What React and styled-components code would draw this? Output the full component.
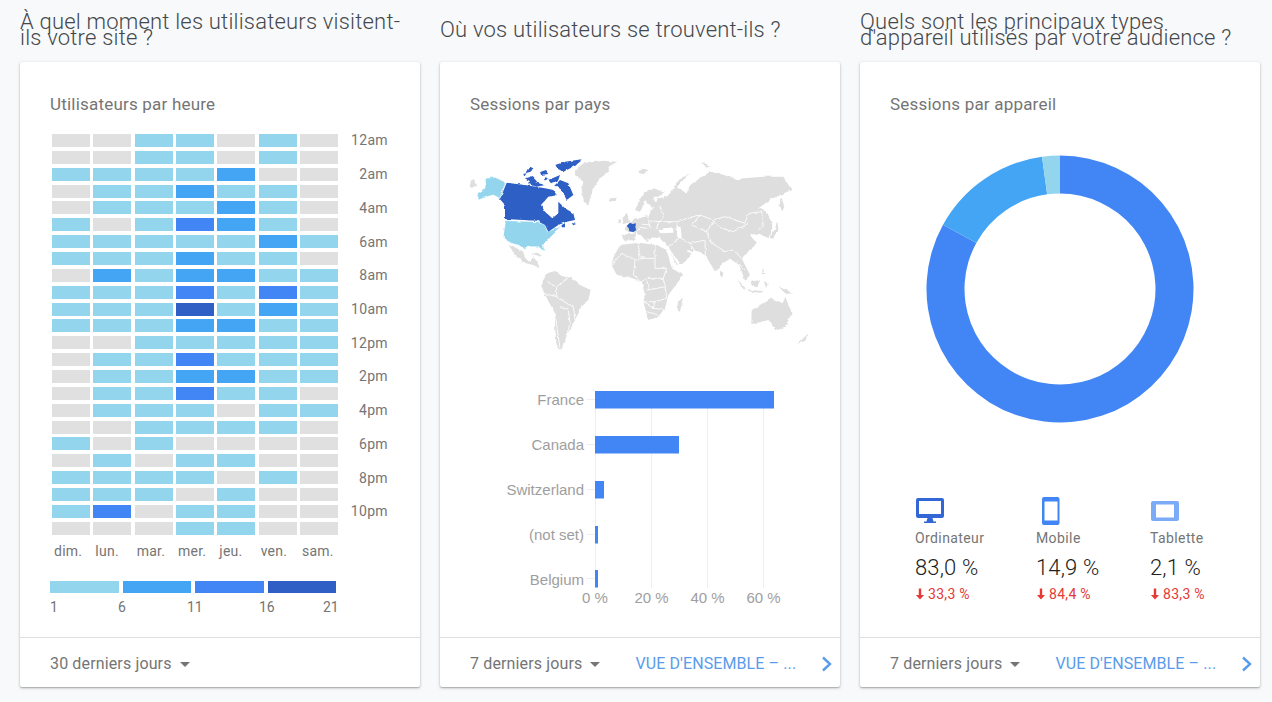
import React from "react";
import styled, { createGlobalStyle } from "styled-components";

const GRAY = "#e0e0e0";
const HEAT = [GRAY, "#93d5ed", "#45a5f5", "#4285f4", "#2f5ec4"];

const Global = createGlobalStyle`
  html, body { margin: 0; padding: 0; background: #f8f9fa; }
  body { font-family: Roboto, "Noto Sans", sans-serif; overflow: hidden; }
`;

const Page = styled.main`
  display: grid;
  grid-template-columns: repeat(3, 400px);
  column-gap: 20px;
  padding: 0 12px 0 20px;
  height: 702px;
  box-sizing: border-box;
`;
const Section = styled.section`
  display: flex;
  flex-direction: column;
`;
const Heading = styled.h2`
  display: flex;
  align-items: center;
  height: 59px;
  margin: 0 0 1px;
  font-size: 22px;
  font-weight: 300;
  line-height: 16px;
  letter-spacing: 0.2px;
  color: #44484c;
`;
const Card = styled.article`
  display: flex;
  flex-direction: column;
  height: 625px;
  margin-top: 2px;
  background: #fff;
  border-radius: 2px;
  box-shadow: 0 1px 3px rgba(60, 64, 67, 0.35), 0 1px 1px rgba(60, 64, 67, 0.2);
`;
const Body = styled.div`
  flex: 1;
  padding: 32px 0 0 30px;
  min-height: 0;
`;
const CardTitle = styled.h3`
  margin: 0;
  font-size: 17px;
  font-weight: 400;
  line-height: 20px;
  letter-spacing: 0.2px;
  color: #757575;
`;
const Footer = styled.footer`
  display: flex;
  align-items: center;
  height: 50px;
  padding: 2px 6px 0 30px;
  border-top: 1px solid #e0e0e0;
  box-sizing: border-box;
`;
const RangeSelect = styled.span`
  display: flex;
  align-items: center;
  font-size: 16px;
  letter-spacing: 0.14px;
  color: #757575;
`;
const Caret = styled.i`
  width: 0;
  height: 0;
  margin-left: 8px;
  margin-top: 2px;
  border-left: 5px solid transparent;
  border-right: 5px solid transparent;
  border-top: 5px solid #757575;
`;
const OverviewLink = styled.a`
  margin-left: 35px;
  font-size: 16px;
  letter-spacing: 0.1px;
  color: #5a9bea;
  white-space: nowrap;
`;
const Chevron = styled.svg`
  margin-left: auto;
  display: block;
`;

const HeatGrid = styled.div`
  display: grid;
  grid-template-columns: repeat(7, 38px) 1fr;
  grid-auto-rows: 13px;
  column-gap: 3.33px;
  row-gap: 3.87px;
  width: 336px;
  margin: 20px 0 0 2px;
`;
const HeatCell = styled.span`
  background: ${(p) => HEAT[p.$level]};
`;
const HourLabel = styled.span`
  padding-top: 0.4px;
  font-size: 14px;
  line-height: 13px;
  letter-spacing: 0.35px;
  text-align: right;
  color: #757575;
  white-space: nowrap;
`;
const DayRow = styled.div`
  display: grid;
  grid-template-columns: repeat(7, 38px);
  column-gap: 3.33px;
  margin: 8px 0 0 2px;
`;
const Day = styled.span`
  padding-left: 2px;
  font-size: 14px;
  line-height: 16px;
  letter-spacing: 0.25px;
  color: #757575;
`;
const LegendBar = styled.div`
  display: flex;
  gap: 4px;
  width: 286px;
  height: 12px;
  margin-top: 22px;
`;
const LegendSwatch = styled.span`
  flex: 1;
  background: ${(p) => HEAT[p.$level]};
`;
const LegendScale = styled.div`
  display: grid;
  grid-template-columns: 68px 69px 72px 64px auto;
  width: 290px;
  margin-top: 6px;
  font-size: 14px;
  line-height: 16px;
  color: #757575;
`;

const MapBody = styled.div`
  flex: 1;
  padding: 32px 0 0 30px;
`;
const MapSvg = styled.svg`
  display: block;
  width: 360px;
  height: 210px;
  margin: 36px 0 0 -10px;
`;
const ChartSvg = styled.svg`
  display: block;
  width: 360px;
  height: 240px;
  margin: 20px 0 0 -10px;
  font-family: "Liberation Sans", Arial, sans-serif;
  font-size: 15px;
  fill: #9e9e9e;
`;
const DonutSvg = styled.svg`
  display: block;
  width: 270px;
  height: 270px;
  margin: 40px 0 0 35px;
`;
const Stats = styled.div`
  display: grid;
  grid-template-columns: 121px 114px 1fr;
  margin: 72px 0 0 25px;
`;
const Stat = styled.div`
  display: flex;
  flex-direction: column;
`;
const StatIcon = styled.svg`
  display: block;
  width: 30px;
  height: 30px;
  margin-bottom: 2px;
`;
const StatLabel = styled.span`
  font-size: 14px;
  line-height: 20px;
  letter-spacing: 0.4px;
  color: #757575;
`;
const StatValue = styled.span`
  margin-top: 6px;
  font-size: 22px;
  font-weight: 300;
  line-height: 28px;
  letter-spacing: 0.15px;
  color: #212121;
`;
const StatDelta = styled.span`
  display: flex;
  align-items: center;
  gap: 3px;
  margin-top: 3px;
  font-size: 14px;
  line-height: 18px;
  letter-spacing: 0.3px;
  color: #e53935;
`;

const heat = [
  "0011010","0011010","1111200","0112110","0111210","1013210",
  "1111121","1112110","0212211","1113131","1114121","1112211",
  "0011111","0113111","0112211","0113110","0111011","0011110",
  "1010000","0101100","1111010","1110100","1301100","0001100",
];
const hours = {0:"12am",2:"2am",4:"4am",6:"6am",8:"8am",10:"10am",12:"12pm",14:"2pm",16:"4pm",18:"6pm",20:"8pm",22:"10pm"};
const days = ["dim.","lun.","mar.","mer.","jeu.","ven.","sam."];

const grayLand = [
  "M30 92L42 88L48 108L34 112Z",
  "M345 62L370 40L430 32L472 35L445 50L450 62L420 85L400 115L395 130L385 165L372 155L365 120L370 95L345 75Z",
  "M450 146L470 142L466 152L452 154Z",
  "M535 62L566 56L552 72L538 70Z",
  "M640 112L660 86L688 72L668 92L650 112Z",
  "M724 38L750 46L735 52Z",
  "M145 285L170 295L190 305L195 325L208 335L220 322L232 335L238 355L220 345L198 340L172 322Z",
  "M212 312L232 308L248 318L228 316Z",
  "M250 390L262 370L285 362L305 378L335 385L360 405L392 420L385 450L360 470L355 490L335 530L320 555L310 590L300 600L290 590L285 530L285 490L255 435L245 410Z",
  "M480 285L535 278L590 285L620 300L635 355L670 375L625 435L615 475L595 500L565 510L550 455L555 435L545 395L505 380L470 375L455 345L462 318Z",
  "M655 450L668 444L660 485L650 480Z",
  "M488 205L500 188L512 216L490 222Z",
  "M474 210L484 208L482 220L474 218Z",
  "M525 180L550 130L580 115L615 125L595 140L580 140L590 165L575 170L555 150L540 185Z",
  "M580 165L595 145L620 140L648 110L680 130L690 105L720 85L750 65L780 70L830 90L850 85L910 80L970 80L995 120L960 135L930 150L895 175L920 185L940 225L925 265L895 250L870 255L890 280L845 325L870 375L855 392L838 345L810 326L786 342L766 366L736 316L702 300L672 340L650 345L622 292L600 265L572 262L562 276L540 252L528 248L505 245L492 238L505 222L530 205L562 192Z",
  "M485 254L528 250L526 270L492 272Z",
  "M958 166L964 140L973 170L966 186Z",
  "M928 262L946 236L950 214L956 236L938 266Z",
  "M830 386L858 416L848 414Z",
  "M864 418L908 424L900 428L866 424Z",
  "M872 396L900 390L892 412L876 408Z",
  "M912 394L926 396L918 414Z",
  "M956 410L1000 430L978 432Z",
  "M906 350L916 372L908 372Z",
  "M875 482L935 445L968 460L976 440L995 490L976 530L946 540L926 510L874 522Z",
  "M1012 582L1046 550L1036 572Z",
  "M780 362L790 368L786 380L780 376Z",
];
const seas = [
  "M595 238L640 232L640 248L600 250Z",
  "M650 228L662 232L665 265L652 262Z",
];
const seaLines = [
  "M620 288L662 352",
  "M682 302L706 312",
  "M560 268L610 278",
  "M530 205L560 196L580 170",
];
const borders = [
  "M600 215L650 215L700 200L720 195L760 210L795 200L855 220L865 190L905 185L910 225L895 240",
  "M760 215L785 235L820 245L865 220",
  "M740 245L750 275L795 305L820 300L845 325",
  "M720 195L695 225L740 245L760 215",
  "M650 215L655 260L690 280L702 300",
  "M622 292L660 262",
  "M600 168L610 200L600 215L585 238",
  "M562 192L570 235M570 212L600 215M545 222L570 225",
  "M528 250L540 232L562 235",
  "M690 280L735 270L736 316",
  "M810 326L830 370M830 335L855 360",
  "M260 395L290 410L320 385M290 410L290 440L250 430M290 440L320 460L340 470L345 510M285 490L300 595M300 470L325 480L330 520L320 555",
  "M485 310L455 345M535 285L540 320L555 325L585 325L585 285M485 310L525 330L550 325M525 330L520 375L545 395L560 385L610 385L620 355L585 355L585 325M560 385L565 420L615 410L610 385M615 410L620 445L585 455L550 455M585 455L580 475L550 455M580 475L615 480M560 485L595 495",
];

const polar = (r, a) => [135 + r * Math.sin(a), 135 - r * Math.cos(a)];
const arc = (from, to, fill) => {
  const a0 = (from / 100) * 2 * Math.PI;
  const a1 = (to / 100) * 2 * Math.PI;
  const R = 133.5;
  const r = 95.5;
  const large = to - from > 50 ? 1 : 0;
  const [x0, y0] = polar(R, a0);
  const [x1, y1] = polar(R, a1);
  const [x2, y2] = polar(r, a1);
  const [x3, y3] = polar(r, a0);
  return (
    <path
      fill={fill}
      d={`M${x0} ${y0}A${R} ${R} 0 ${large} 1 ${x1} ${y1}L${x2} ${y2}A${r} ${r} 0 ${large} 0 ${x3} ${y3}Z`}
    />
  );
};

const bars = [
  { name: "France", y: 11, w: 179, t: 25 },
  { name: "Canada", y: 56, w: 84, t: 70 },
  { name: "Switzerland", y: 101, w: 9, t: 115 },
  { name: "(not set)", y: 146, w: 3, t: 160 },
  { name: "Belgium", y: 190, w: 3, t: 205 },
];

const CardFoot = ({ range, link }) => (
  <Footer>
    <RangeSelect>
      {range}
      <Caret />
    </RangeSelect>
    {link && <OverviewLink>VUE D'ENSEMBLE – ...</OverviewLink>}
    {link && (
      <Chevron width="14" height="18" viewBox="0 0 14 18">
        <path d="M3 2.500L10 9L3 15.500" fill="none" stroke="#5a9bea" strokeWidth="2.400" />
      </Chevron>
    )}
  </Footer>
);

const DownArrow = () => (
  <svg width="10" height="12" viewBox="0 0 10 12">
    <path d="M3.800 0.500h2.400v6.500H9L5 11.500L1 7h2.800z" fill="#e53935" />
  </svg>
);

export default function App() {
  return (
    <Page>
      <Global />
      <Section>
        <Heading>À quel moment les utilisateurs visitent-ils votre site ?</Heading>
        <Card>
          <Body>
            <CardTitle>Utilisateurs par heure</CardTitle>
            <HeatGrid>
              {heat.map((row, i) => (
                <React.Fragment key={i}>
                  {row.split("").map((v, j) => (
                    <HeatCell key={j} $level={+v} />
                  ))}
                  <HourLabel>{hours[i] || ""}</HourLabel>
                </React.Fragment>
              ))}
            </HeatGrid>
            <DayRow>
              {days.map((d) => (
                <Day key={d}>{d}</Day>
              ))}
            </DayRow>
            <LegendBar>
              {[1, 2, 3, 4].map((l) => (
                <LegendSwatch key={l} $level={l} />
              ))}
            </LegendBar>
            <LegendScale>
              {[1, 6, 11, 16, 21].map((n) => (
                <span key={n}>{n}</span>
              ))}
            </LegendScale>
          </Body>
          <CardFoot range="30 derniers jours" />
        </Card>
      </Section>

      <Section>
        <Heading>Où vos utilisateurs se trouvent-ils ?</Heading>
        <Card>
          <MapBody>
            <CardTitle>Sessions par pays</CardTitle>
            <MapSvg viewBox="0 0 1080 630">
              <defs>
                <filter id="rough" x="-5%" y="-5%" width="110%" height="110%">
                  <feTurbulence type="fractalNoise" baseFrequency="0.07" numOctaves="2" seed="4" result="n" />
                  <feDisplacementMap in="SourceGraphic" in2="n" scale="9" xChannelSelector="R" yChannelSelector="G" />
                  <feGaussianBlur stdDeviation="0.7" />
                </filter>
              </defs>
              <g filter="url(#rough)">
                <g fill="#dedede">
                  {grayLand.map((d, i) => (
                    <path key={i} d={d} />
                  ))}
                </g>
                <g fill="#fff">
                  {seas.map((d, i) => (
                    <path key={i} d={d} />
                  ))}
                </g>
                <g fill="none" stroke="#fff" strokeWidth="5">
                  {seaLines.map((d, i) => (
                    <path key={i} d={d} />
                  ))}
                </g>
                <g fill="none" stroke="#fff" strokeWidth="2.600">
                  {borders.map((d, i) => (
                    <path key={i} d={d} />
                  ))}
                </g>
                <g fill="#93d5ed" stroke="#fff" strokeWidth="1.500">
                  <path d="M77 85L105 82L137 97L120 145L100 135L80 140L55 150L53 130L75 115Z" />
                  <path d="M137 212L230 215L255 225L263 245L305 228L285 245L273 262L250 285L253 305L235 290L205 290L195 298L175 285L145 278L130 255Z" />
                </g>
                <g fill="#2f5ec4">
                  <path d="M120 148L140 98L195 105L255 115L280 120L290 135L265 140L243 165L255 185L277 205L295 190L295 155L315 175L340 190L345 210L320 215L295 225L265 245L255 225L230 212L135 207L135 165Z" />
                  <path d="M285 45L315 35L365 28L340 50L310 65L290 55Z" />
                  <path d="M300 90L325 100L340 135L320 150L305 120L285 105Z" />
                  <path d="M195 85L215 78L232 95L220 100Z" />
                  <path d="M190 72L215 65L220 55L210 50L193 80Z" />
                  <path d="M210 92L255 105L230 110L205 102Z" />
                  <path d="M240 65L255 60L265 72L243 75Z" />
                  <path d="M265 90L300 75L295 90L273 100Z" />
                  <path d="M255 82L265 85L260 92L252 90Z" />
                  <path d="M305 225L315 220L315 232L305 232Z" />
                  <path d="M335 218L348 222L340 226Z" />
                </g>
              </g>
              <path fill="#2f5ec4" d="M510 218L518 222L528 220L526 232L529 240L520 246L508 244L506 234L500 228Z" />
            </MapSvg>
            <ChartSvg viewBox="0 0 360 240">
              {[135.5, 191.5, 247.5, 303.5].map((x) => (
                <path key={x} d={`M${x} 11V208`} stroke="#eeeeee" strokeWidth="1" />
              ))}
              {bars.map((b) => (
                <g key={b.name}>
                  <path d={`M127 ${b.y + 8.5}H135`} stroke="#eeeeee" strokeWidth="1" />
                  <text x="124" y={b.t} textAnchor="end">{b.name}</text>
                  <rect x="135" y={b.y} width={b.w} height="17.5" fill="#4285f4" />
                </g>
              ))}
              {[["0 %", 135], ["20 %", 191.5], ["40 %", 247.5], ["60 %", 303.5]].map(([t, x]) => (
                <text key={t} x={x} y="223" textAnchor="middle">{t}</text>
              ))}
            </ChartSvg>
          </MapBody>
          <CardFoot range="7 derniers jours" link />
        </Card>
      </Section>

      <Section>
        <Heading>Quels sont les principaux types d'appareil utilisés par votre audience ?</Heading>
        <Card>
          <Body>
            <CardTitle>Sessions par appareil</CardTitle>
            <DonutSvg viewBox="0 0 270 270">
              {arc(0, 83, "#4285f4")}
              {arc(83, 97.85, "#45a5f5")}
              {arc(97.85, 100, "#93d5ed")}
            </DonutSvg>
            <Stats>
              <Stat>
                <StatIcon viewBox="0 0 30 30">
                  <path
                    fill="#3367d6"
                    fillRule="evenodd"
                    d="M3 2h24a2 2 0 0 1 2 2v16a2 2 0 0 1-2 2H3a2 2 0 0 1-2-2V4a2 2 0 0 1 2-2zM4 5v13h22V5zM12.500 22h5l1 3.500h2.500V27H9v-1.500h2.500z"
                  />
                </StatIcon>
                <StatLabel>Ordinateur</StatLabel>
                <StatValue>83,0 %</StatValue>
                <StatDelta><DownArrow />33,3 %</StatDelta>
              </Stat>
              <Stat>
                <StatIcon viewBox="0 0 30 30">
                  <path
                    fill="#4285f4"
                    fillRule="evenodd"
                    d="M8 1h13.500a2 2 0 0 1 2 2v24a2 2 0 0 1-2 2H8a2 2 0 0 1-2-2V3a2 2 0 0 1 2-2zM8.500 5.500v19h13v-19z"
                  />
                </StatIcon>
                <StatLabel>Mobile</StatLabel>
                <StatValue>14,9 %</StatValue>
                <StatDelta><DownArrow />84,4 %</StatDelta>
              </Stat>
              <Stat>
                <StatIcon viewBox="0 0 30 30">
                  <path
                    fill="#7baaf7"
                    fillRule="evenodd"
                    d="M3 5h24a2 2 0 0 1 2 2v16a2 2 0 0 1-2 2H3a2 2 0 0 1-2-2V7a2 2 0 0 1 2-2zM6 8.500v13h18v-13z"
                  />
                </StatIcon>
                <StatLabel>Tablette</StatLabel>
                <StatValue>2,1 %</StatValue>
                <StatDelta><DownArrow />83,3 %</StatDelta>
              </Stat>
            </Stats>
          </Body>
          <CardFoot range="7 derniers jours" link />
        </Card>
      </Section>
    </Page>
  );
}
